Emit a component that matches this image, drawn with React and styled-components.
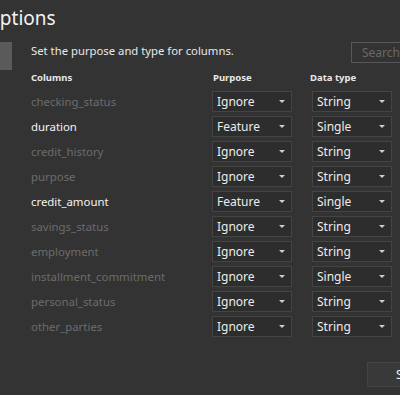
import React from 'react';
import styled, { createGlobalStyle } from 'styled-components';

const GlobalStyle = createGlobalStyle`
  html, body {
    margin: 0;
    padding: 0;
    background: #333333;
    overflow: hidden;
  }
  body {
    font-family: "Noto Sans", "Open Sans", sans-serif;
    color: #e6e6e6;
  }
`;

const Page = styled.div`
  width: 400px;
  height: 395px;
  overflow: hidden;
`;

const Title = styled.h1`
  margin: 0 0 0 -15px;
  height: 42px;
  font-size: 19px;
  font-weight: 400;
  line-height: 36px;
  color: #f2f2f2;
`;

const Body = styled.div`
  display: flex;
  gap: 19px;
`;

const Sidebar = styled.div`
  width: 12px;
  flex-shrink: 0;
`;

const NavItem = styled.div`
  height: 28px;
  background: ${p => (p.active ? '#5a5a5a' : 'transparent')};
`;

const Content = styled.div`
  width: 420px;
  flex-shrink: 0;
`;

const TopRow = styled.div`
  display: flex;
  justify-content: space-between;
  align-items: flex-start;
`;

const Description = styled.p`
  margin: 0;
  font-size: 11.3px;
  line-height: 14px;
  padding-top: 2px;
  color: #e8e8e8;
`;

const SearchBox = styled.div`
  width: 100px;
  height: 21px;
  box-sizing: border-box;
  border: 1px solid #585858;
  padding-left: 10px;
  font-size: 12px;
  line-height: 19px;
  color: #686868;
`;

const Table = styled.div`
  display: grid;
  grid-template-columns: 161px 80px 80px;
  column-gap: 20px;
  row-gap: 4px;
  margin-top: 7px;
  align-items: center;
`;

const HeadCell = styled.div`
  font-size: 9.5px;
  font-weight: 700;
  line-height: 16px;
  color: #e8e8e8;
  margin-left: ${p => p.shift || 0}px;
  margin-bottom: 1px;
`;

const ColName = styled.div`
  font-size: 11.4px;
  line-height: 21px;
  color: ${p => (p.feature ? '#f4f4f4' : '#6c6c6c')};
`;

const Select = styled.div`
  height: 21px;
  box-sizing: border-box;
  border: 1px solid #444444;
  background: #2d2d2d;
  display: flex;
  align-items: center;
  justify-content: space-between;
  padding: 0 6px 0 4px;
  font-size: 12px;
  color: #ececec;
`;

const Caret = () => (
  <svg width="6" height="3" viewBox="0 0 6 3">
    <path d="M0 0 L6 0 L3 3 Z" fill="#d0d0d0" />
  </svg>
);

const Footer = styled.div`
  display: flex;
  justify-content: flex-end;
  margin-top: 25px;
`;

const Button = styled.button`
  width: 84px;
  height: 25px;
  border: 1px solid #444444;
  background: #393939;
  color: #f0f0f0;
  font-family: inherit;
  font-size: 12px;
  padding: 0;
`;

const rows = [
  { name: 'checking_status', purpose: 'Ignore', type: 'String' },
  { name: 'duration', purpose: 'Feature', type: 'Single' },
  { name: 'credit_history', purpose: 'Ignore', type: 'String' },
  { name: 'purpose', purpose: 'Ignore', type: 'String' },
  { name: 'credit_amount', purpose: 'Feature', type: 'Single' },
  { name: 'savings_status', purpose: 'Ignore', type: 'String' },
  { name: 'employment', purpose: 'Ignore', type: 'String' },
  { name: 'installment_commitment', purpose: 'Ignore', type: 'Single' },
  { name: 'personal_status', purpose: 'Ignore', type: 'String' },
  { name: 'other_parties', purpose: 'Ignore', type: 'String' },
];

export default function App() {
  return (
    <Page>
      <GlobalStyle />
      <Title>Options</Title>
      <Body>
        <Sidebar>
          <NavItem active />
        </Sidebar>
        <Content>
          <TopRow>
            <Description>Set the purpose and type for columns.</Description>
            <SearchBox>Search</SearchBox>
          </TopRow>
          <Table>
            <HeadCell>Columns</HeadCell>
            <HeadCell shift={1}>Purpose</HeadCell>
            <HeadCell shift={-2}>Data type</HeadCell>
            {rows.map(r => (
              <React.Fragment key={r.name}>
                <ColName feature={r.purpose === 'Feature'}>{r.name}</ColName>
                <Select>
                  <span>{r.purpose}</span>
                  <Caret />
                </Select>
                <Select>
                  <span>{r.type}</span>
                  <Caret />
                </Select>
              </React.Fragment>
            ))}
          </Table>
          <Footer>
            <Button>Save</Button>
          </Footer>
        </Content>
      </Body>
    </Page>
  );
}
